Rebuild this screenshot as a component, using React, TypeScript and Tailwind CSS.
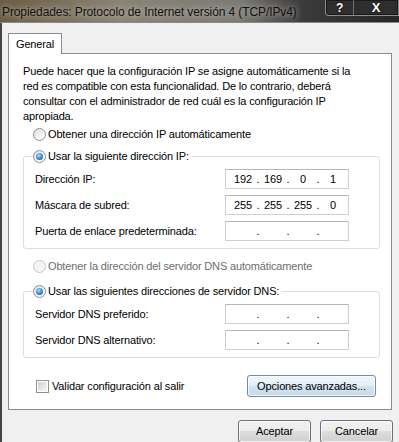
import React from 'react';

type RadioProps = { checked?: boolean; disabled?: boolean };

function Radio({ checked, disabled }: RadioProps) {
  return (
    <span
      className={`flex items-center justify-center w-[13px] h-[13px] rounded-full border shrink-0 ${
        disabled
          ? 'border-[#c6c6c6] bg-[#f4f4f4]'
          : 'border-[#8e8f8f] bg-[linear-gradient(135deg,#d9dadb,#f7f7f7_60%,#ffffff)]'
      }`}
    >
      {checked && (
        <span className="w-[7px] h-[7px] rounded-full bg-[radial-gradient(circle_at_40%_35%,#a9dcfa,#3a86c8_55%,#1b3f70)]" />
      )}
    </span>
  );
}

function Checkbox() {
  return (
    <span className="flex items-center justify-center w-[13px] h-[13px] border border-[#8e8f8f] bg-white shrink-0">
      <span className="w-[9px] h-[9px] bg-[linear-gradient(135deg,#cbcfd5,#e8e9eb_60%,#f6f6f6)]" />
    </span>
  );
}

function IpField({ parts }: { parts: string[] }) {
  return (
    <div className="flex items-center w-[124px] h-[20px] border border-[#ccd0d6] border-t-[#b3b6bc] bg-white pl-[6px]">
      {parts.map((p, i) => (
        <React.Fragment key={i}>
          <span className="w-[22px] text-center">{p}</span>
          {i < 3 && <span className="w-[8px] text-center">.</span>}
        </React.Fragment>
      ))}
    </div>
  );
}

function Button({ label, width, blue }: { label: string; width: string; blue?: boolean }) {
  return (
    <div
      className={`flex items-center justify-center rounded-[3px] border shadow-[inset_0_0_0_1px_rgba(255,255,255,0.7)] ${width} ${
        blue
          ? 'border-[#6f8ea9] bg-[linear-gradient(#f1f6fa,#e4eef6_50%,#d3e3f0_50%,#c8dbeb)]'
          : 'border-[#707070] bg-[linear-gradient(#f2f2f2,#ebebeb_50%,#dddddd_50%,#cfcfcf)]'
      }`}
    >
      {label}
    </div>
  );
}

type Row = { label: string; parts: string[] };

function Group({ legend, rows }: { legend: string; rows: Row[] }) {
  return (
    <fieldset className="ml-[14px] mr-[11px] border border-[#d5dfe5] rounded-[3px] px-[9px] pb-[7px]">
      <legend className="bg-white pr-[3px]">
        <div className="flex items-center gap-[2px] h-[16px]">
          <Radio checked />
          <span>{legend}</span>
        </div>
      </legend>
      <div className="mt-[5px] flex flex-col gap-[6px]">
        {rows.map((r) => (
          <div key={r.label} className="flex items-center justify-between pl-[2px] pr-[21px]">
            <span>{r.label}</span>
            <IpField parts={r.parts} />
          </div>
        ))}
      </div>
    </fieldset>
  );
}

export default function App() {
  const empty = ['', '', '', ''];

  return (
    <div className="w-[399px] h-[442px] overflow-hidden bg-[#f0f0f0] text-[11px] tracking-[-0.15px] text-black font-['Liberation_Sans',Arial,sans-serif]">
      {/* Title bar */}
      <div className="h-[22px] flex items-start bg-[linear-gradient(90deg,#6a5c42_0%,#8a8376_30%,#7c7a75_60%,#3a3a3a_76%,#262626_100%)]">
        <div className="flex-1 h-full flex items-center pl-[2px] pt-[1px] text-[12px] tracking-[-0.1px] text-[#111] whitespace-nowrap [text-shadow:0_0_6px_rgba(235,230,220,0.9)]">
          Propiedades: Protocolo de Internet versión 4 (TCP/IPv4)
        </div>
        <div className="flex w-[74px] h-[16px] shrink-0 border border-t-0 border-[#8c8c8c] rounded-bl-[4px] bg-[#2e2e2e] shadow-[inset_0_0_0_1px_#1a1a1a] font-bold text-white [text-shadow:0_0_2px_#000]">
          <div className="w-[28px] flex items-center justify-center text-[12px] border-r border-[#6e6e6e]">?</div>
          <div className="flex-1 flex items-center justify-center text-[13px]">X</div>
        </div>
      </div>
      <div className="h-[1px] bg-[#8a8a8a]" />

      {/* Client area */}
      <div className="h-[419px] border-l-2 border-[#454545]">
        <div className="pt-[10px] pl-[6px]">
          <div className="relative z-10 w-[54px] h-[21px] -mb-px flex items-center pl-[7px] border border-b-0 border-[#898c95] bg-white">
            General
          </div>
          <div className="w-[384px] h-[357px] border border-[#898c95] bg-white">
            <p className="pt-[10px] pl-[14px] leading-[15px] whitespace-nowrap">
              Puede hacer que la configuración IP se asigne automáticamente si la
              <br />
              red es compatible con esta funcionalidad. De lo contrario, deberá
              <br />
              consultar con el administrador de red cuál es la configuración IP
              <br />
              apropiada.
            </p>

            <div className="mt-[2px] h-[16px] pl-[24px] flex items-center gap-[2px]">
              <Radio />
              <span>Obtener una dirección IP automáticamente</span>
            </div>

            <div className="mt-[6px]">
              <Group
                legend="Usar la siguiente dirección IP:"
                rows={[
                  { label: 'Dirección IP:', parts: ['192', '169', '0', '1'] },
                  { label: 'Máscara de subred:', parts: ['255', '255', '255', '0'] },
                  { label: 'Puerta de enlace predeterminada:', parts: empty },
                ]}
              />
            </div>

            <div className="mt-[9px] h-[16px] pl-[24px] flex items-center gap-[2px] text-[#6d6d6d]">
              <Radio disabled />
              <span>Obtener la dirección del servidor DNS automáticamente</span>
            </div>

            <div className="mt-[9px]">
              <Group
                legend="Usar las siguientes direcciones de servidor DNS:"
                rows={[
                  { label: 'Servidor DNS preferido:', parts: empty },
                  { label: 'Servidor DNS alternativo:', parts: empty },
                ]}
              />
            </div>

            <div className="mt-[17px] h-[22px] pl-[27px] pr-[15px] flex items-center justify-between">
              <div className="flex items-center gap-[3px]">
                <Checkbox />
                <span>Validar configuración al salir</span>
              </div>
              <Button label="Opciones avanzadas..." width="w-[129px] h-[22px]" blue />
            </div>
          </div>
        </div>

        <div className="mt-[10px] pr-[6px] flex justify-end gap-[9px]">
          <Button label="Aceptar" width="w-[73px] h-[23px]" />
          <Button label="Cancelar" width="w-[73px] h-[23px]" />
        </div>
      </div>
    </div>
  );
}
